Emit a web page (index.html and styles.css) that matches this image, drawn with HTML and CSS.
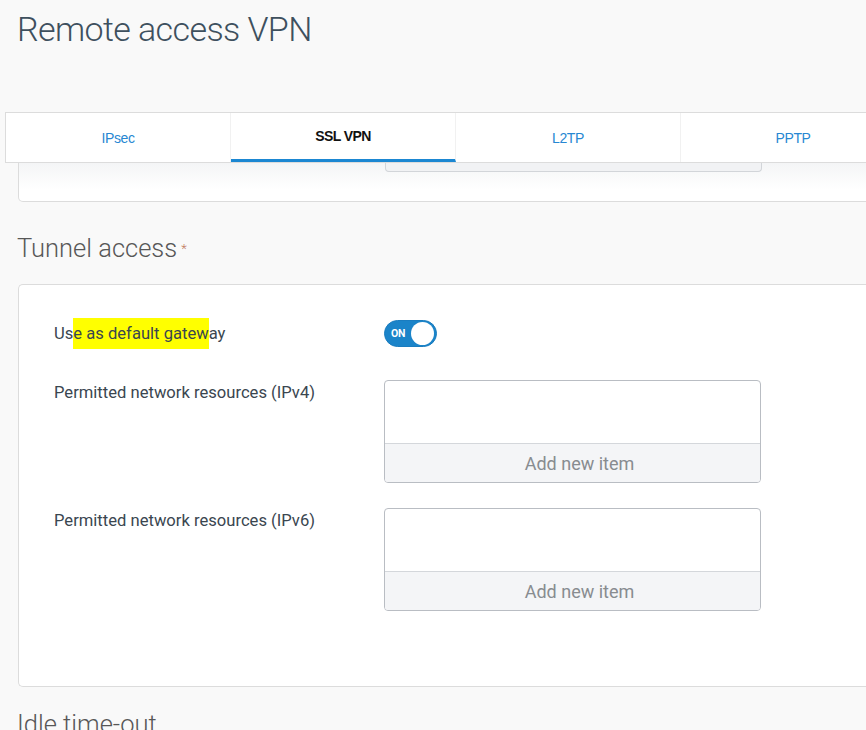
FILE: index.html
```html
<!DOCTYPE html>
<html>
<head>
<meta charset="utf-8">
<link rel="stylesheet" href="styles.css">
</head>
<body>
<div class="page">
  <h1 class="title">Remote access VPN</h1>

  <div class="tabs">
    <div class="tab">IPsec</div>
    <div class="tab active">SSL VPN</div>
    <div class="tab">L2TP</div>
    <div class="tab">PPTP</div>
  </div>

  <div class="card-tail">
    <div class="field-tail"></div>
  </div>

  <h2 class="section">Tunnel access<span class="req">*</span></h2>

  <div class="card">
    <div class="row row-toggle">
      <div class="label">Us<span class="hl">e as default gatew</span>ay</div>
      <div class="toggle"><span class="on">ON</span><span class="knob"></span></div>
    </div>
    <div class="row">
      <div class="label label-top">Permitted network resources (IPv4)</div>
      <div class="listbox">
        <div class="list-area"></div>
        <div class="list-add">Add new item</div>
      </div>
    </div>
    <div class="row">
      <div class="label label-top">Permitted network resources (IPv6)</div>
      <div class="listbox">
        <div class="list-area"></div>
        <div class="list-add">Add new item</div>
      </div>
    </div>
  </div>

  <h2 class="section section-last">Idle time-out</h2>
</div>
</body>
</html>
```

FILE: styles.css
```css
html, body {
  margin: 0;
  padding: 0;
  background: #f9f9f9;
  overflow: hidden;
  height: 730px;
}

.page {
  width: 960px;
  font-family: Roboto, "Liberation Sans", sans-serif;
}

.title {
  margin: 0;
  padding: 8px 0 0 17px;
  height: 112px;
  box-sizing: border-box;
  font-size: 34px;
  line-height: 42px;
  font-weight: 300;
  color: #3e505e;
  letter-spacing: -0.6px;
}

.tabs {
  display: flex;
  margin-left: 5px;
  height: 51px;
  box-sizing: border-box;
  border: 1px solid #dcdcdc;
  border-right: none;
  background: #fff;
  position: relative;
  z-index: 2;
}

.tab {
  width: 225px;
  flex: none;
  display: flex;
  align-items: center;
  justify-content: center;
  font-family: "Liberation Sans", Arial, sans-serif;
  font-size: 14px;
  font-weight: 400;
  letter-spacing: -0.4px;
  color: #2787d2;
  border-right: 1px solid #f1f1f1;
  box-sizing: border-box;
  padding-top: 1px;
}

.tab.active {
  color: #111;
  border-bottom: 3px solid #1b87d2;
  padding-top: 0;
  font-weight: 600;
  letter-spacing: -0.6px;
}

.card-tail {
  margin-left: 18px;
  height: 39px;
  box-sizing: border-box;
  border: 1px solid #dcdcdc;
  border-top: none;
  border-radius: 0 0 0 5px;
  background: linear-gradient(#f4f5f6, #ffffff 70%);
  padding-left: 366px;
}

.field-tail {
  width: 377px;
  height: 9px;
  box-sizing: border-box;
  border: 1px solid #d2d5d9;
  border-top: none;
  border-radius: 0 0 4px 4px;
  background: #f1f2f4;
}

.section {
  margin: 0;
  padding: 31px 0 0 17px;
  height: 82px;
  box-sizing: border-box;
  font-size: 25.5px;
  line-height: 30px;
  font-weight: 300;
  color: #575757;
}

.req {
  font-size: 13px;
  color: #c0765a;
  vertical-align: 4px;
  margin-left: 4px;
}

.card {
  margin-left: 18px;
  height: 403px;
  box-sizing: border-box;
  background: #fff;
  border: 1px solid #dcdcdc;
  border-right: none;
  border-radius: 5px 0 0 5px;
  padding: 35px 0 0 35px;
  display: flex;
  flex-direction: column;
  gap: 25px;
}

.row {
  display: flex;
  align-items: flex-start;
}

.row-toggle {
  align-items: center;
  margin-bottom: 8px;
}

.label {
  width: 330px;
  flex: none;
  font-size: 16.6px;
  line-height: 20px;
  color: #3a4650;
}

.label-top {
  padding-top: 3px;
}

.hl {
  background: #ffff00;
  padding: 6px 0 6px;
}

.toggle {
  width: 53px;
  height: 27px;
  box-sizing: border-box;
  border-radius: 14px;
  background: #1b84c9;
  border: 1px solid #1a7cbf;
  display: flex;
  align-items: center;
  justify-content: space-between;
  padding: 0 2px 0 6px;
}

.on {
  font-size: 10.5px;
  font-weight: 700;
  color: #fff;
  letter-spacing: -0.2px;
}

.knob {
  width: 23px;
  height: 23px;
  border-radius: 50%;
  background: #fff;
}

.listbox {
  width: 377px;
  flex: none;
  box-sizing: border-box;
  border: 1px solid #b9bdc3;
  border-radius: 4px;
  overflow: hidden;
  background: #fff;
}

.list-area {
  height: 62px;
  border-bottom: 1px solid #d4d7db;
}

.list-add {
  height: 38px;
  background: #f4f5f7;
  display: flex;
  align-items: center;
  justify-content: center;
  padding-left: 14px;
  font-size: 18px;
  color: #888c90;
}

.section-last {
  padding-top: 22px;
}
```
